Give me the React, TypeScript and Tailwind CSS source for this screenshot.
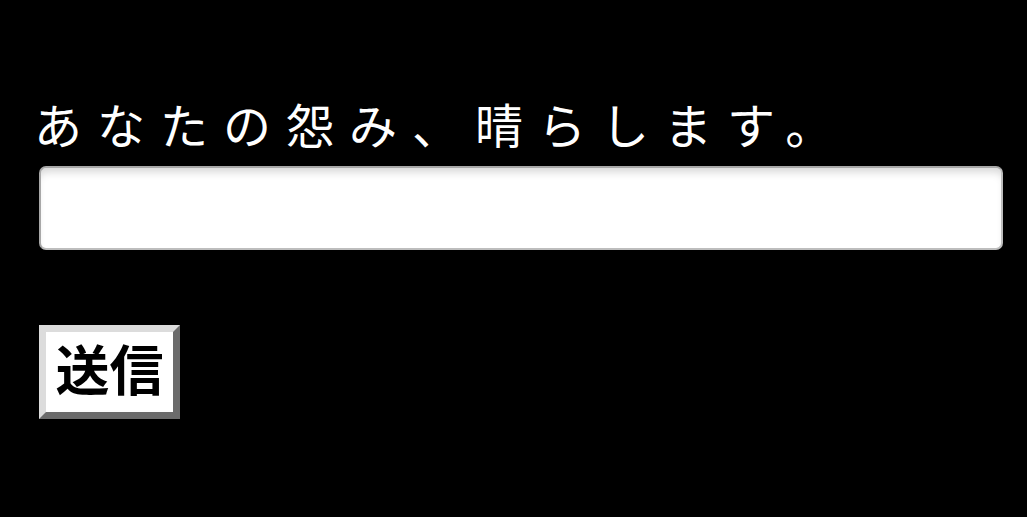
export default function App() {
  return (
    <div className="min-h-[517px] w-full bg-black px-[39px] pt-[90px] font-['Noto_Sans_CJK_JP',sans-serif]">
      <h1 className="-ml-[5px] text-[48px] font-normal leading-[66px] tracking-[15px] text-white">
        あなたの怨み、晴らします。
      </h1>
      <input
        type="text"
        className="mt-[10px] block h-[84px] w-[964px] rounded-[7px] border-2 border-t-[#a8a8a8] border-l-[#a8a8a8] border-b-[#bdbdbd] border-r-[#bdbdbd] bg-white px-3 text-[40px] shadow-[inset_0_8px_8px_-4px_rgba(0,0,0,0.16)] outline-none"
      />
      <button
        type="button"
        className="mt-[75px] block h-[94px] w-[141px] border-[7px] border-t-[#dcdcdc] border-l-[#dcdcdc] border-b-[#6b6b6b] border-r-[#6b6b6b] bg-white pb-[8px] text-[54px] font-bold leading-none text-black"
      >
        送信
      </button>
    </div>
  );
}
